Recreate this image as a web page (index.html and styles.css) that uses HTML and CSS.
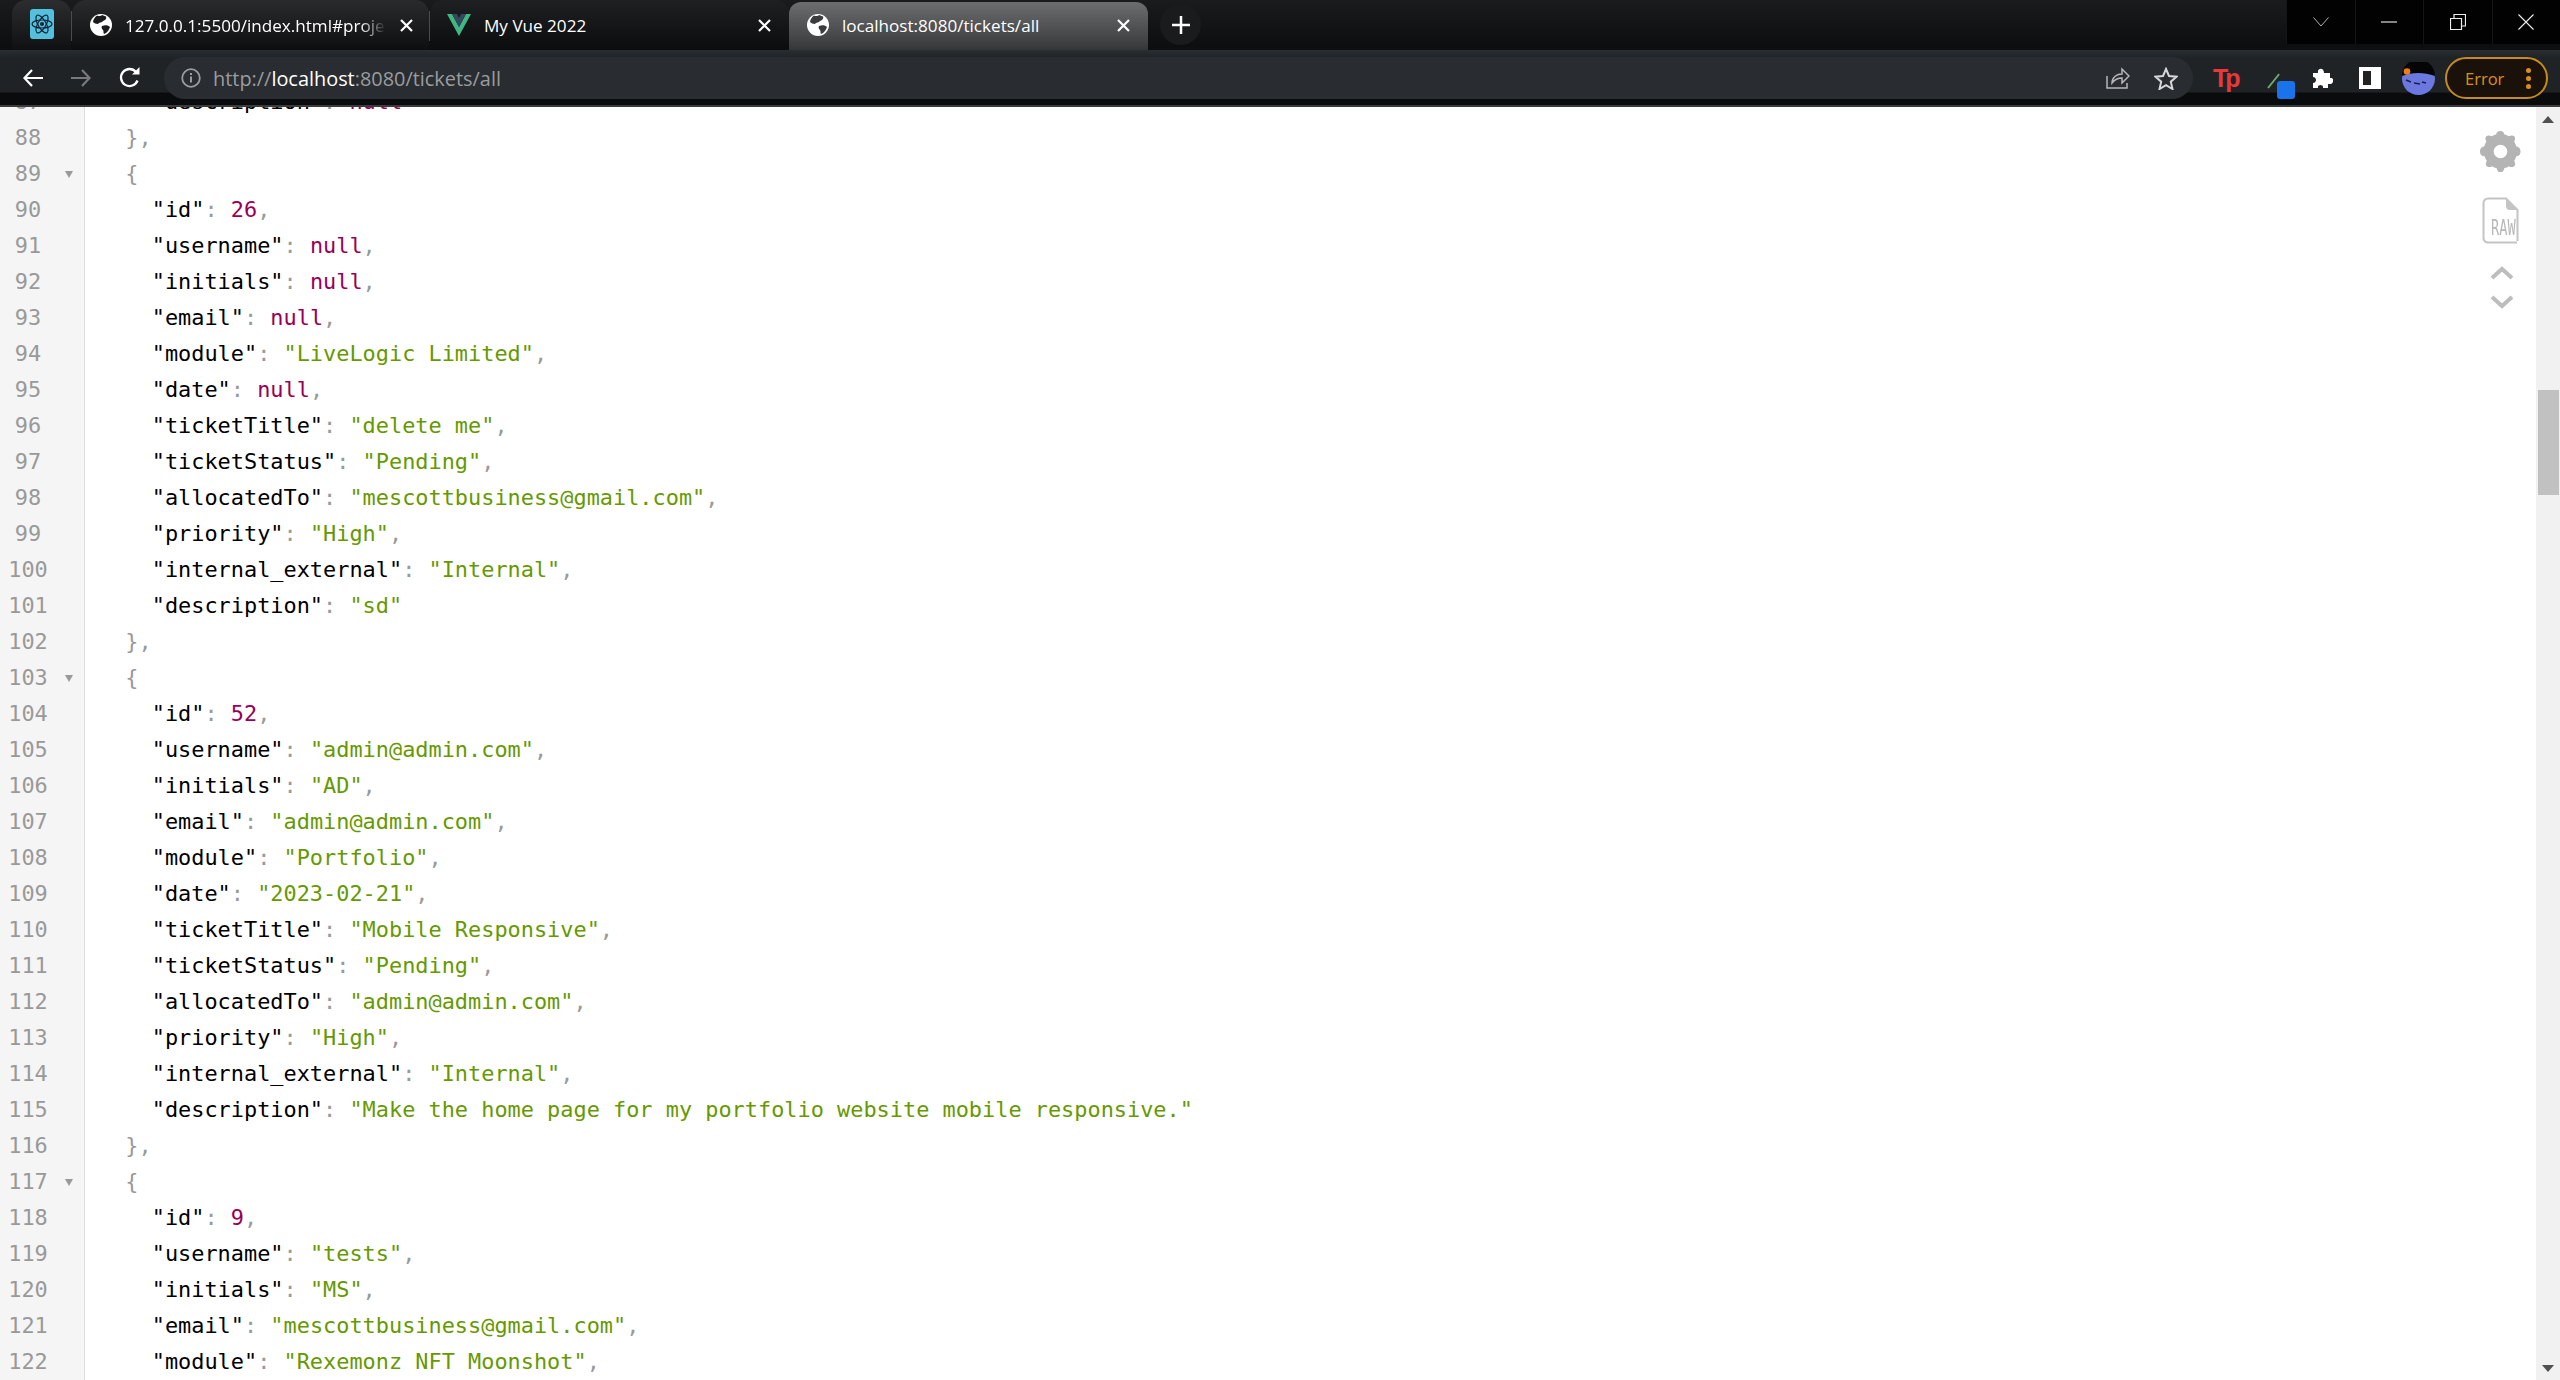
FILE: index.html
```html
<!DOCTYPE html>
<html lang="en">
<head>
<meta charset="utf-8">
<title>localhost:8080/tickets/all</title>
<link rel="stylesheet" href="styles.css">
</head>
<body>
<header class="chrome">
  <div class="tabstrip">
    <div class="pinned">
      <svg class="react" viewBox="0 0 24 30"><rect width="24" height="30" rx="3" fill="#53c1de"/><g fill="none" stroke="#123" stroke-width="1.2"><ellipse cx="12" cy="15" rx="10" ry="4"/><ellipse cx="12" cy="15" rx="10" ry="4" transform="rotate(60 12 15)"/><ellipse cx="12" cy="15" rx="10" ry="4" transform="rotate(120 12 15)"/></g><circle cx="12" cy="15" r="2" fill="#123"/></svg>
    </div>
    <div class="sep"></div>
    <div class="tab first">
      <svg class="globe" viewBox="0 0 22 22"><circle cx="11" cy="11" r="11" fill="#fff"/><path d="M7 1.500c2 1 4 .5 5-.5l4 1.500c1 2-1 4-3 4.500-1 2-4 1-5 3-2 0-4-1-5-2 0-2 2-5 4-6.500zM12 12c3-1 6-1 8 1-1 3-3 6-6 7-1-1 0-3-1-4-1-.5-2-3-1-4z" fill="#1a1b1c"/></svg>
      <span class="tab-title fade">127.0.0.1:5500/index.html#projects</span>
      <svg class="tab-x" viewBox="0 0 13 13"><path d="M1 1l11 11M12 1 1 12" stroke="#fff" stroke-width="2.200"/></svg>
    </div>
    <div class="sep"></div>
    <div class="tab second">
      <svg class="vue" viewBox="0 0 24 22"><path d="M0 0h5l7 13L19 0h5L12 22z" fill="#41b883"/><path d="M5 0h5l2 4 2-4h5l-7 13z" fill="#35495e"/></svg>
      <span class="tab-title">My Vue 2022</span>
      <svg class="tab-x" viewBox="0 0 13 13"><path d="M1 1l11 11M12 1 1 12" stroke="#fff" stroke-width="2.200"/></svg>
    </div>
    <div class="tab active">
      <svg class="globe" viewBox="0 0 22 22"><circle cx="11" cy="11" r="11" fill="#fff"/><path d="M7 1.500c2 1 4 .5 5-.5l4 1.500c1 2-1 4-3 4.500-1 2-4 1-5 3-2 0-4-1-5-2 0-2 2-5 4-6.500zM12 12c3-1 6-1 8 1-1 3-3 6-6 7-1-1 0-3-1-4-1-.5-2-3-1-4z" fill="#3a3c3e"/></svg>
      <span class="tab-title">localhost:8080/tickets/all</span>
      <svg class="tab-x" viewBox="0 0 13 13"><path d="M1 1l11 11M12 1 1 12" stroke="#fff" stroke-width="2.200"/></svg>
    </div>
    <div class="newtab"><svg viewBox="0 0 18 18" class="plus"><path d="M9 0v18M0 9h18" stroke="#fff" stroke-width="2.500"/></svg></div>
    <div class="winctl">
      <div class="wbtn"><svg viewBox="0 0 16 10" class="wi"><path d="M.5 .5 8 9l7.500-8.500" fill="none" stroke="#b0b0b0"/></svg></div>
      <div class="wbtn"><svg viewBox="0 0 16 2" class="wi min"><path d="M0 1h16" stroke="#ddd" stroke-width="1.200"/></svg></div>
      <div class="wbtn"><svg viewBox="0 0 16 16" class="wi res"><path d="M.5 4.500h11v11H.5zM4 4.500V.5h11.500V12H11.500" fill="none" stroke="#eee" stroke-width="1.200"/></svg></div>
      <div class="wbtn"><svg viewBox="0 0 16 16" class="wi res"><path d="M.5 .5l15 15M15.500 .5l-15 15" stroke="#eee" stroke-width="1.100"/></svg></div>
    </div>
  </div>
  <div class="toolbar">
    <svg class="nav back" viewBox="0 0 20 18"><path d="M9 1 1.500 9 9 17M2 9h18" fill="none" stroke="#fff" stroke-width="2.200"/></svg>
    <svg class="nav fwd" viewBox="0 0 20 18"><path d="M11 1l7.500 8-7.500 8M18 9H0" fill="none" stroke="#77797b" stroke-width="2.200"/></svg>
    <svg class="nav reload" viewBox="0 0 22 22"><path d="M18.500 13.500A8.500 8.500 0 1 1 17 5" fill="none" stroke="#fff" stroke-width="2.300"/><path d="M13 7.500h7.500V0z" fill="#fff"/></svg>
    <div class="omnibox">
      <svg class="info" viewBox="0 0 20 20"><circle cx="10" cy="10" r="8.800" fill="none" stroke="#9a9c9e" stroke-width="1.800"/><path d="M10 8.500v6M10 5v2" stroke="#9a9c9e" stroke-width="2"/></svg>
      <span class="url">http://<b>localhost</b>:8080/tickets/all</span>
      <svg class="share" viewBox="0 0 24 22"><path d="M1 9v12h20v-5M6 16c0-6 5-9 10-9V2l7 7-7 7v-5c-4 0-7 1-10 5z" fill="none" stroke="#b5b7b9" stroke-width="1.500"/></svg>
      <svg class="star" viewBox="0 0 24 23"><path d="M12 2l3 7 7.500.7-5.700 5 1.700 7.300L12 18.200 5.500 22l1.700-7.300-5.700-5L9 9z" fill="none" stroke="#d5d7d9" stroke-width="2"/></svg>
    </div>
    <span class="tp">Tp</span>
    <div class="dropper">
      <svg class="drop-i" viewBox="0 0 18 22"><path d="M1 21 13 6" stroke="#6fa86f" stroke-width="2"/><path d="M12 7l4-5" stroke="#222" stroke-width="4"/></svg>
      <span class="drop-badge"></span>
    </div>
    <svg class="puzzle" viewBox="0 0 22 22"><path d="M2 6h5c-1-5 6-6 6 0h6v5c5-1 4 7-1 6h-1v4h-5c1-4-6-4-5 0H2v-5c4 0 4-6 0-6z" fill="#fff"/></svg>
    <div class="sidepanel"></div>
    <svg class="avatar" viewBox="0 0 33 33"><circle cx="16.500" cy="16.500" r="16.500" fill="#6b78e0"/><path d="M0 14A16.500 16.500 0 0 1 33 14C22 10 10 10 0 14z" fill="#050505"/><circle cx="5" cy="9.500" r="3.300" fill="#f07d12"/><path d="M4 18l5 2M12 21l6 1M20 20l4 1" stroke="#1c1f4a" stroke-width="1.500"/></svg>
    <div class="errpill"><span>Error</span><i class="dots"><b></b><b></b><b></b></i></div>
  </div>
</header>
<main class="viewport">
  <div class="doc">
    <div class="lines">
<div class="row"><span class="ln">87</span><span class="fold"></span><span class="code">    <span class="k">"description"</span><span class="p">: </span><span class="n">null</span></span></div>
<div class="row"><span class="ln">88</span><span class="fold"></span><span class="code">  <span class="p">},</span></span></div>
<div class="row"><span class="ln">89</span><span class="fold open"></span><span class="code">  <span class="p">{</span></span></div>
<div class="row"><span class="ln">90</span><span class="fold"></span><span class="code">    <span class="k">"id"</span><span class="p">: </span><span class="n">26</span><span class="p">,</span></span></div>
<div class="row"><span class="ln">91</span><span class="fold"></span><span class="code">    <span class="k">"username"</span><span class="p">: </span><span class="n">null</span><span class="p">,</span></span></div>
<div class="row"><span class="ln">92</span><span class="fold"></span><span class="code">    <span class="k">"initials"</span><span class="p">: </span><span class="n">null</span><span class="p">,</span></span></div>
<div class="row"><span class="ln">93</span><span class="fold"></span><span class="code">    <span class="k">"email"</span><span class="p">: </span><span class="n">null</span><span class="p">,</span></span></div>
<div class="row"><span class="ln">94</span><span class="fold"></span><span class="code">    <span class="k">"module"</span><span class="p">: </span><span class="s">"LiveLogic Limited"</span><span class="p">,</span></span></div>
<div class="row"><span class="ln">95</span><span class="fold"></span><span class="code">    <span class="k">"date"</span><span class="p">: </span><span class="n">null</span><span class="p">,</span></span></div>
<div class="row"><span class="ln">96</span><span class="fold"></span><span class="code">    <span class="k">"ticketTitle"</span><span class="p">: </span><span class="s">"delete me"</span><span class="p">,</span></span></div>
<div class="row"><span class="ln">97</span><span class="fold"></span><span class="code">    <span class="k">"ticketStatus"</span><span class="p">: </span><span class="s">"Pending"</span><span class="p">,</span></span></div>
<div class="row"><span class="ln">98</span><span class="fold"></span><span class="code">    <span class="k">"allocatedTo"</span><span class="p">: </span><span class="s">"mescottbusiness@gmail.com"</span><span class="p">,</span></span></div>
<div class="row"><span class="ln">99</span><span class="fold"></span><span class="code">    <span class="k">"priority"</span><span class="p">: </span><span class="s">"High"</span><span class="p">,</span></span></div>
<div class="row"><span class="ln">100</span><span class="fold"></span><span class="code">    <span class="k">"internal_external"</span><span class="p">: </span><span class="s">"Internal"</span><span class="p">,</span></span></div>
<div class="row"><span class="ln">101</span><span class="fold"></span><span class="code">    <span class="k">"description"</span><span class="p">: </span><span class="s">"sd"</span></span></div>
<div class="row"><span class="ln">102</span><span class="fold"></span><span class="code">  <span class="p">},</span></span></div>
<div class="row"><span class="ln">103</span><span class="fold open"></span><span class="code">  <span class="p">{</span></span></div>
<div class="row"><span class="ln">104</span><span class="fold"></span><span class="code">    <span class="k">"id"</span><span class="p">: </span><span class="n">52</span><span class="p">,</span></span></div>
<div class="row"><span class="ln">105</span><span class="fold"></span><span class="code">    <span class="k">"username"</span><span class="p">: </span><span class="s">"admin@admin.com"</span><span class="p">,</span></span></div>
<div class="row"><span class="ln">106</span><span class="fold"></span><span class="code">    <span class="k">"initials"</span><span class="p">: </span><span class="s">"AD"</span><span class="p">,</span></span></div>
<div class="row"><span class="ln">107</span><span class="fold"></span><span class="code">    <span class="k">"email"</span><span class="p">: </span><span class="s">"admin@admin.com"</span><span class="p">,</span></span></div>
<div class="row"><span class="ln">108</span><span class="fold"></span><span class="code">    <span class="k">"module"</span><span class="p">: </span><span class="s">"Portfolio"</span><span class="p">,</span></span></div>
<div class="row"><span class="ln">109</span><span class="fold"></span><span class="code">    <span class="k">"date"</span><span class="p">: </span><span class="s">"2023-02-21"</span><span class="p">,</span></span></div>
<div class="row"><span class="ln">110</span><span class="fold"></span><span class="code">    <span class="k">"ticketTitle"</span><span class="p">: </span><span class="s">"Mobile Responsive"</span><span class="p">,</span></span></div>
<div class="row"><span class="ln">111</span><span class="fold"></span><span class="code">    <span class="k">"ticketStatus"</span><span class="p">: </span><span class="s">"Pending"</span><span class="p">,</span></span></div>
<div class="row"><span class="ln">112</span><span class="fold"></span><span class="code">    <span class="k">"allocatedTo"</span><span class="p">: </span><span class="s">"admin@admin.com"</span><span class="p">,</span></span></div>
<div class="row"><span class="ln">113</span><span class="fold"></span><span class="code">    <span class="k">"priority"</span><span class="p">: </span><span class="s">"High"</span><span class="p">,</span></span></div>
<div class="row"><span class="ln">114</span><span class="fold"></span><span class="code">    <span class="k">"internal_external"</span><span class="p">: </span><span class="s">"Internal"</span><span class="p">,</span></span></div>
<div class="row"><span class="ln">115</span><span class="fold"></span><span class="code">    <span class="k">"description"</span><span class="p">: </span><span class="s">"Make the home page for my portfolio website mobile responsive."</span></span></div>
<div class="row"><span class="ln">116</span><span class="fold"></span><span class="code">  <span class="p">},</span></span></div>
<div class="row"><span class="ln">117</span><span class="fold open"></span><span class="code">  <span class="p">{</span></span></div>
<div class="row"><span class="ln">118</span><span class="fold"></span><span class="code">    <span class="k">"id"</span><span class="p">: </span><span class="n">9</span><span class="p">,</span></span></div>
<div class="row"><span class="ln">119</span><span class="fold"></span><span class="code">    <span class="k">"username"</span><span class="p">: </span><span class="s">"tests"</span><span class="p">,</span></span></div>
<div class="row"><span class="ln">120</span><span class="fold"></span><span class="code">    <span class="k">"initials"</span><span class="p">: </span><span class="s">"MS"</span><span class="p">,</span></span></div>
<div class="row"><span class="ln">121</span><span class="fold"></span><span class="code">    <span class="k">"email"</span><span class="p">: </span><span class="s">"mescottbusiness@gmail.com"</span><span class="p">,</span></span></div>
<div class="row"><span class="ln">122</span><span class="fold"></span><span class="code">    <span class="k">"module"</span><span class="p">: </span><span class="s">"Rexemonz NFT Moonshot"</span><span class="p">,</span></span></div>
    </div>
    <div class="tools">
      <svg class="gear" viewBox="0 0 42 42"><path fill="#b4b4b4" fill-rule="evenodd" d="M21 0c2.500 0 3.500 1.500 4 3.500 2 .5 3 1 4.500 2 2-1 4-1.500 5.500 0s1 3.500 0 5.500c1 1.500 1.500 2.500 2 4.500 2 .5 4.500 1.500 4.500 5.500s-2.500 4.500-4.500 5c-.5 2-1 3-2 4.500 1 2 1.500 4 0 5.500s-3.500 1-5.500 0c-1.500 1-2.500 1.500-4.500 2-.5 2-1.500 4.500-4 4.500s-3.500-2.500-4-4.500c-2-.5-3-1-4.500-2-2 1-4 1.500-5.500 0s-1-3.500 0-5.500c-1-1.500-1.500-2.500-2-4.500C2.500 25.500 0 25 0 21s2.500-5 4.500-5.500c.5-2 1-3 2-4.500-1-2-1.500-4 0-5.500s3.500-1 5.500 0c1.500-1 2.500-1.500 4.500-2 .5-2 1.500-3.500 4.500-3.500zm0 14a7 7 0 1 0 0 14 7 7 0 0 0 0-14z"/></svg>
      <div class="rawdoc">
        <svg class="rawshape" viewBox="0 0 37 47"><path d="M35.500 44V13L24 1.500H6A4.500 4.500 0 0 0 1.500 6v35A4.500 4.500 0 0 0 6 45.500h29" fill="none" stroke="#c4c4c4" stroke-width="2"/><path d="M24 2l11 11h-7a4 4 0 0 1-4-4z" fill="#c4c4c4"/></svg>
        <span class="raw">RAW</span>
      </div>
      <svg class="chev" viewBox="0 0 24 14"><path d="M2 12 12 3l10 9" fill="none" stroke="#bdbdbd" stroke-width="4"/></svg>
      <svg class="chev down" viewBox="0 0 24 14"><path d="M2 2l10 9 10-9" fill="none" stroke="#bdbdbd" stroke-width="4"/></svg>
    </div>
  </div>
  <aside class="scrollbar">
    <span class="sb-arrow up"></span>
    <span class="sb-thumb"></span>
    <span class="sb-arrow dn"></span>
  </aside>
</main>
</body>
</html>
```

FILE: styles.css
```css
* { box-sizing: border-box; }
html, body { margin: 0; height: 100%; }
body {
  display: flex;
  flex-direction: column;
  height: 1380px;
  overflow: hidden;
  background: #fff;
  font-family: "Open Sans", "Liberation Sans", sans-serif;
}

/* browser chrome */
.chrome { flex: none; height: 107px; display: flex; flex-direction: column; background: #0a0b0c; }
.tabstrip {
  height: 50px;
  display: flex;
  background: linear-gradient(#1a1b1c, #0c0d0e);
  position: relative;
}
.pinned { width: 59px; margin-left: 12px; height: 50px; padding: 9px 0 0 18px; background: linear-gradient(#2c2d2e, #0f1011); border-radius: 14px 14px 0 0; }
.react { width: 24px; height: 30px; display: block; }
.sep { width: 1px; height: 30px; margin-top: 11px; background: #4a4b4c; flex: none; }
.tab { height: 50px; display: flex; align-items: center; color: #fff; font-size: 17.100px; position: relative; flex: none; }
.tab.first { width: 357px; padding: 0 16px 0 18px; background: linear-gradient(#2a2b2c, #0d0e0f); border-radius: 14px 14px 0 0; }
.tab.second { width: 359px; padding: 0 18px 0 17px; background: linear-gradient(#1f2021, #0b0c0d); border-radius: 14px 14px 0 0; }
.tab.active { width: 359px; height: 57px; padding: 0 18px 11px 18px; margin-top: 2px; background: linear-gradient(#6c6d6e, #3f4143 70%, #26292b); border-radius: 12px 12px 0 0; }
.globe { width: 22px; height: 22px; flex: none; margin-right: 13px; }
.vue { width: 24px; height: 22px; flex: none; margin-right: 13px; }
.tab-title { flex: 1; min-width: 0; white-space: nowrap; overflow: hidden; }
.first .tab-title { flex: none; width: 261px; }
.fade { -webkit-mask-image: linear-gradient(90deg, #000 90%, transparent); mask-image: linear-gradient(90deg, #000 90%, transparent); }
.tab-x { width: 13px; height: 13px; flex: none; margin-left: auto; }
.newtab { width: 41px; height: 41px; margin: 4px 0 0 12px; border-radius: 50%; background: #1a1b1c; display: flex; align-items: center; justify-content: center; }
.plus { width: 18px; height: 18px; }
.winctl { margin-left: auto; width: 274px; height: 44px; display: flex; background: #020202; }
.wbtn { flex: 1; display: flex; align-items: center; justify-content: center; border-left: 1px solid #151515; }
.wi { width: 16px; height: 10px; }
.wi.min { height: 2px; }
.wi.res { height: 16px; }

.toolbar {
  height: 57px;
  display: flex;
  align-items: flex-start;
  padding-top: 7px;
  background: linear-gradient(#2b2e30 0, #202326 8px, #202326 42px, #0a0b0c 43px, #0a0b0c 55px, #3a3b3c 55px);
  position: relative;
}
.nav { flex: none; }
.back { width: 20px; height: 18px; margin: 12px 0 0 23px; }
.fwd { width: 20px; height: 18px; margin: 12px 0 0 28px; }
.reload { width: 22px; height: 22px; margin: 10px 0 0 28px; }
.omnibox {
  width: 2029px;
  height: 42px;
  margin-left: 23px;
  padding: 0 15px 0 17px;
  display: flex;
  align-items: center;
  background: #292d31;
  border-radius: 21px;
  flex: none;
}
.info { width: 20px; height: 20px; flex: none; margin-right: 12px; }
.url { color: #9a9c9e; font-size: 19.900px; flex: 1; white-space: nowrap; }
.url b { color: #fff; font-weight: 400; }
.share { width: 24px; height: 22px; margin-right: 24px; }
.star { width: 24px; height: 23px; }
.tp { color: #e8383a; font: 700 25px/1 "Liberation Sans", sans-serif; letter-spacing: -3px; margin: 9px 0 0 20px; width: 32px; flex: none; }
.dropper { width: 30px; height: 32px; margin: 10px 0 0 22px; position: relative; flex: none; }
.drop-i { width: 18px; height: 22px; display: block; }
.drop-badge { position: absolute; left: 10px; top: 14px; width: 18px; height: 18px; border-radius: 3px; background: #1a73e8; }
.puzzle { width: 22px; height: 22px; flex: none; margin: 10px 0 0 14px; }
.sidepanel { width: 22px; height: 22px; flex: none; margin: 10px 0 0 26px; background: #222; border: 4px solid #fff; border-right-width: 10px; }
.avatar { width: 33px; height: 33px; flex: none; margin: 5px 0 0 21px; }
.errpill {
  width: 103px;
  height: 42px;
  margin-left: 10px;
  padding: 0 15px 0 18px;
  border: 2px solid #c68a1e;
  border-radius: 21px;
  display: flex;
  align-items: center;
  justify-content: space-between;
  color: #d8901c;
  font-size: 16.500px;
  background: #1a120a;
  flex: none;
}
.dots { display: flex; flex-direction: column; gap: 3px; }
.dots b { width: 5px; height: 5px; border-radius: 50%; background: #d8901c; display: block; }

/* JSON viewer */
.viewport { flex: 1; min-height: 0; display: flex; overflow: hidden; }
.doc { flex: 1; min-width: 0; position: relative; overflow: hidden; background: #fff; }
.lines { margin-top: -23px; font: 21.900px/36px "DejaVu Sans Mono", monospace; }
.row { display: flex; height: 36px; }
.ln { flex: none; width: 56px; text-align: center; color: #999; background: #f5f5f5; }
.fold { flex: none; width: 29px; background: #f5f5f5; border-right: 1px solid #ddd; position: relative; }
.fold.open::after {
  content: "";
  position: absolute;
  left: 9px;
  top: 15px;
  border: 4px solid transparent;
  border-top: 7px solid #999;
  border-bottom: 0;
}
.code { padding-left: 14px; white-space: pre; color: #000; }
.k { color: #000; }
.s { color: #690; }
.n { color: #905; }
.p { color: #999; }

.tools { position: absolute; left: 2480px; top: 24px; width: 44px; display: flex; flex-direction: column; align-items: center; }
.gear { width: 41px; height: 41px; margin-left: -3px; display: block; }
.rawdoc { width: 37px; height: 47px; margin: 25px 0 0 -3px; position: relative; }
.rawshape { width: 37px; height: 47px; display: block; }
.raw {
  position: absolute;
  left: 9px;
  top: 22px;
  color: #b8b8b8;
  font: 22px/18px "DejaVu Sans Mono", monospace;
  white-space: nowrap;
  transform: scaleX(.62);
  transform-origin: left;
}
.chev { width: 24px; height: 14px; margin-top: 22px; display: block; }
.chev.down { margin-top: 15px; }

.scrollbar { flex: none; width: 24px; background: #f1f1f1; display: flex; flex-direction: column; align-items: center; padding-top: 9px; position: relative; }
.sb-arrow { width: 0; height: 0; border-left: 6px solid transparent; border-right: 6px solid transparent; flex: none; }
.up { border-bottom: 7px solid #505050; }
.dn { border-top: 7px solid #505050; margin-top: 870px; }
.sb-thumb { width: 21px; height: 105px; margin-top: 267px; background: #c1c1c1; flex: none; }
```
